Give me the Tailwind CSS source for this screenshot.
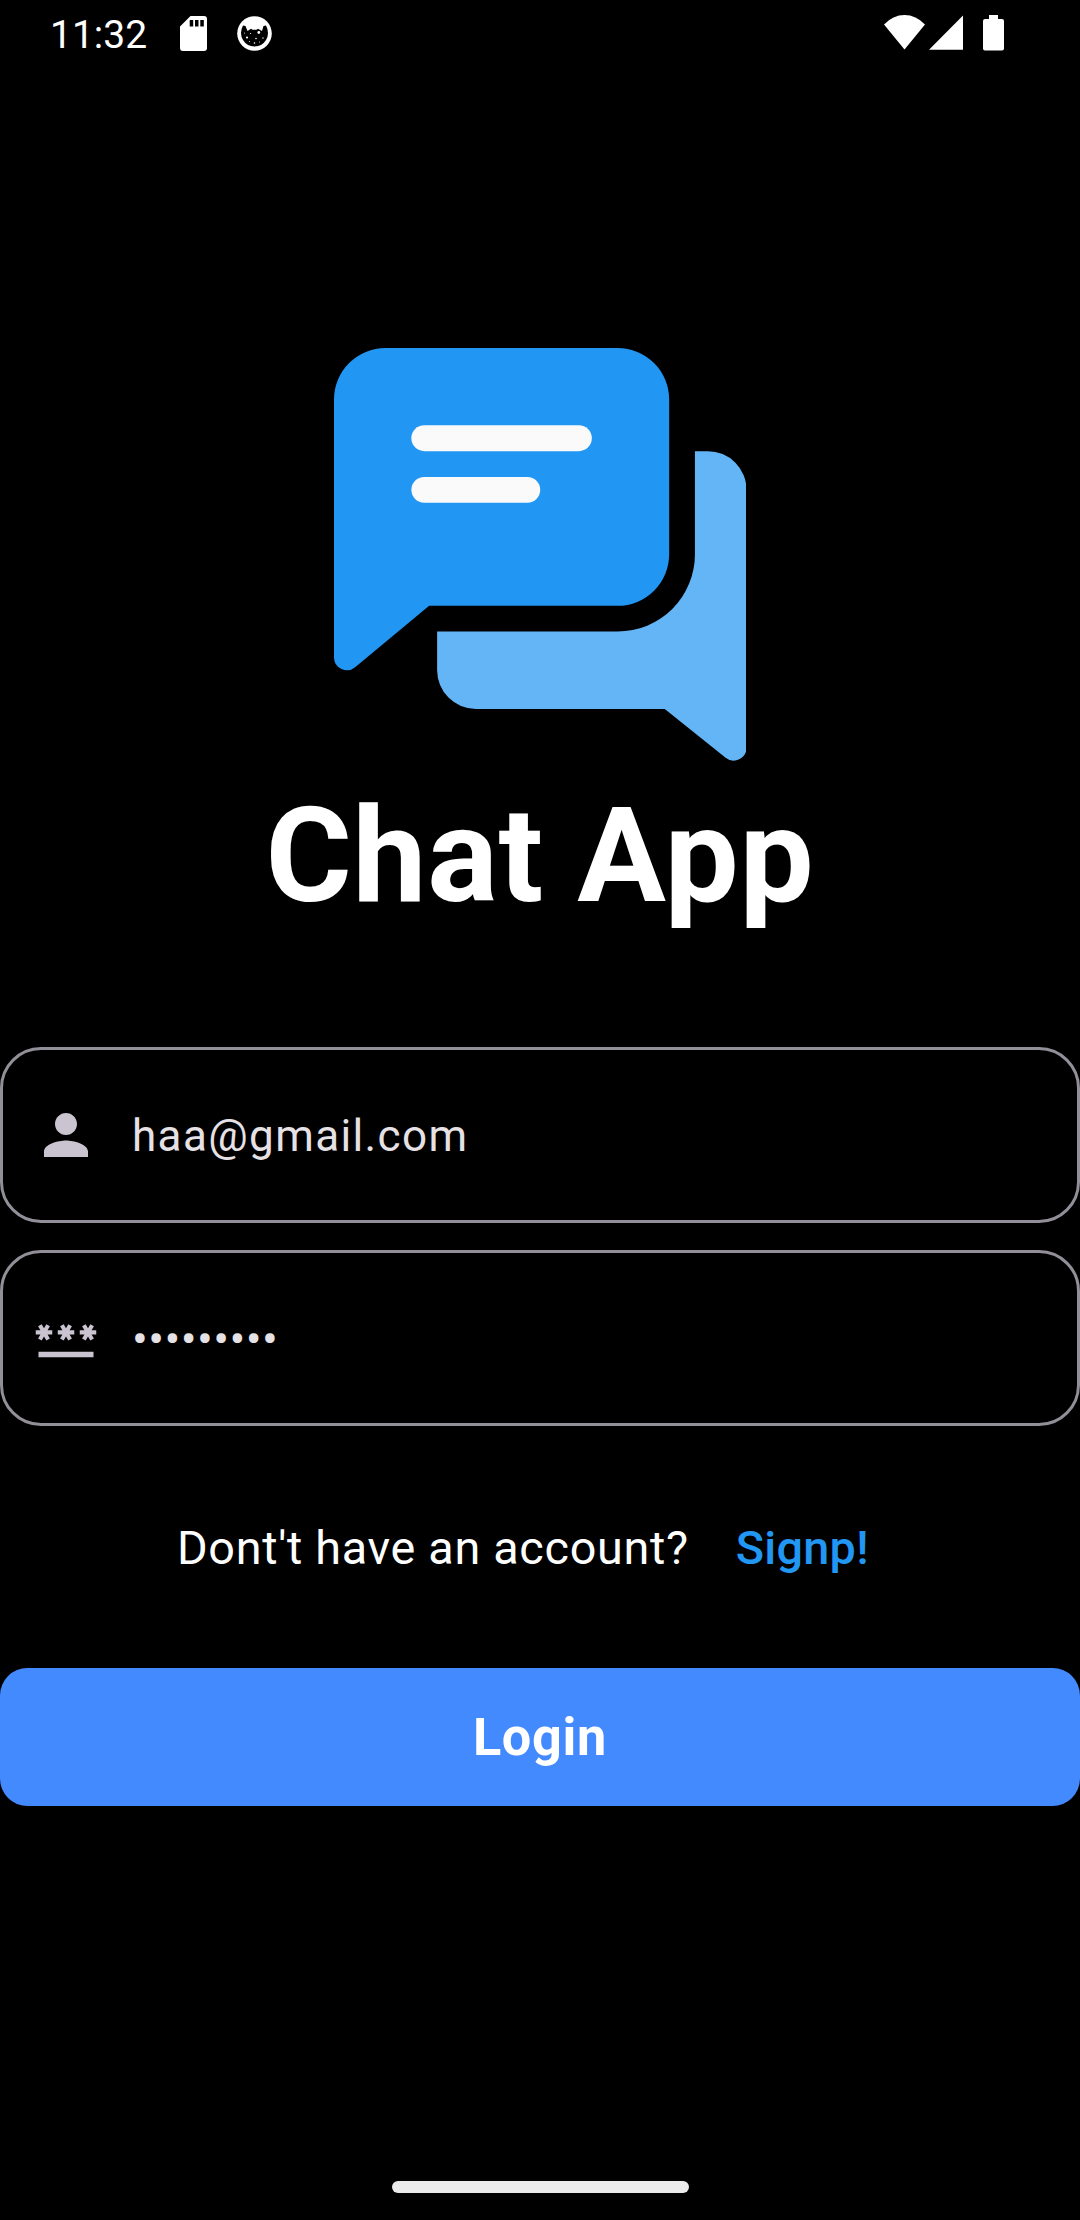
<!DOCTYPE html>
<html lang="en">
<head>
<meta charset="utf-8">
<title>Chat App</title>
<script src="https://cdn.jsdelivr.net/npm/@tailwindcss/browser@4"></script>
</head>
<body class="bg-black">
<div class="flex h-[2220px] w-[1080px] flex-col overflow-hidden bg-black font-[Roboto,sans-serif] text-white">
  <!-- Status bar -->
  <header class="flex h-[66px] shrink-0 items-start pl-[50px] pr-[76px]">
    <span class="w-[130px] pt-3 text-[39px] leading-[46px]">11:32</span>
    <svg class="mt-4 h-[35px] w-[27px]" viewBox="0 0 27 35"><path fill="#fff" fill-rule="evenodd" d="M10.500 0H24Q27 0 27 3V32Q27 35 24 35H3Q0 35 0 32V10.500ZM9.700 4V10.500H13.200V4ZM15 4V10.500H18.500V4ZM20.300 4V10.500H23.800V4Z"/></svg>
    <svg class="ml-[30px] mt-4 h-[35px] w-[35px]" viewBox="0 0 35 35">
      <circle cx="17.500" cy="17.500" r="17.300" fill="#fff"/>
      <path d="M6 9.500L8.500 10L10.500 15L14 12.800L15.500 13.800H19.500L21 12.800L25 15L26.500 10L29 9.500Q33 17 29 24Q25 30.500 17.500 30.500Q10 30.500 6 24Q2 17 6 9.500Z" fill="#000"/>
      <g fill="#fff"><circle cx="10" cy="21.500" r="1.100"/><circle cx="21.800" cy="16.500" r="1.400"/><circle cx="13.500" cy="17.500" r=".6"/><circle cx="19" cy="22.500" r=".8"/><circle cx="26" cy="22" r=".7"/><circle cx="17.500" cy="27" r=".8"/><circle cx="12.500" cy="25.500" r=".5"/><circle cx="22.500" cy="26" r=".5"/><circle cx="7.500" cy="17" r=".5"/></g>
    </svg>
    <div class="ml-auto flex items-start pt-[15px]">
      <svg class="h-[35px] w-[41px]" viewBox="0 0 41 35"><path fill="#fff" d="M0 9.500Q9 0 20.500 0T41 9.500L20.500 34.500Z"/></svg>
      <svg class="ml-1 h-[35px] w-[34px]" viewBox="0 0 34 35"><path fill="#fff" d="M34 .5V34.700H0Z"/></svg>
      <svg class="ml-5 h-[36px] w-[21px]" viewBox="0 0 21 36"><path fill="#fff" d="M6 0H15V4H19Q21 4 21 6V33.500Q21 35.500 19 35.500H2Q0 35.500 0 33.500V6Q0 4 2 4H6Z"/></svg>
    </div>
  </header>

  <main class="flex flex-col">
    <svg class="mx-auto mt-[282px] h-[412.5px] w-[412.5px] shrink-0" viewBox="0 0 16 16">
      <path fill="#64b5f6" d="M14 4h.5A1.500 1.500 0 0 1 16 5.500V15.500A.5.5 0 0 1 15.190 15.895L12.830 14H5.500A1.500 1.500 0 0 1 4 12.500V11H11A3 3 0 0 0 14 8Z"/>
      <path fill="#2196f3" d="M2 0H11A2 2 0 0 1 13 2V8A2 2 0 0 1 11 10H3.690L.82 12.380A.5.5 0 0 1 0 12V2A2 2 0 0 1 2 0Z"/>
      <rect x="3" y="3" width="7" height="1" rx=".5" fill="#fafafa"/>
      <rect x="3" y="5" width="5" height="1" rx=".5" fill="#fafafa"/>
    </svg>
    <h1 class="mt-[18px] text-center text-[132px] font-bold leading-[154px] tracking-[0.6875px]">Chat App</h1>

    <form class="mt-[114px] flex flex-col gap-[27px]">
      <div class="flex h-[176px] items-center rounded-[41px] border-[3px] border-[#938f99] pl-[30px]">
        <svg class="size-[66px]" viewBox="0 0 24 24" fill="#cac4d0"><path d="M12 12c2.210 0 4-1.790 4-4s-1.790-4-4-4-4 1.790-4 4 1.790 4 4 4zm0 2c-2.670 0-8 1.340-8 4v2h16v-2c0-2.660-5.330-4-8-4z"/></svg>
        <span class="ml-[33px] pt-[2px] text-[44px] leading-[66px] tracking-[1.375px] text-[#e6e1e5]">haa@gmail.com</span>
      </div>
      <div class="flex h-[176px] items-center rounded-[41px] border-[3px] border-[#938f99] pl-[30px]">
        <svg class="size-[66px]" viewBox="0 0 24 24" fill="#cac4d0">
          <defs><path id="star" d="M3.150 12.950 4 11.470l.85 1.480 1.300-.75-.85-1.480H7v-1.500H5.300l.85-1.470L4.850 7 4 8.470 3.150 7l-1.300.75.85 1.470H1v1.500h1.700l-.85 1.480z"/></defs>
          <path d="M2 17h20v2H2z"/><use href="#star"/><use href="#star" x="8"/><use href="#star" x="16"/>
        </svg>
        <span class="ml-[33px] pt-[2px] text-[47px] leading-[66px] tracking-[0.4px] text-[#e6e1e5]">•••••••••</span>
      </div>
    </form>

    <div class="mt-[95px] flex h-[55px] items-center pl-[177px] text-[46.75px] leading-[55px] tracking-[0.6875px]">
      <span class="whitespace-nowrap">Dont't have an account?</span>
      <a class="ml-[47px] font-medium tracking-[0.275px] text-[#2196f3]">Signp!</a>
    </div>

    <button class="mt-[92px] h-[138px] w-full rounded-[27.5px] bg-[#448aff] pt-[3px] text-[52.25px] font-bold tracking-[0.6875px]">Login</button>
  </main>

  <!-- Navigation handle -->
  <div class="mx-auto mb-[27px] mt-auto h-[12px] w-[297px] shrink-0 rounded-full bg-[#ebebeb]"></div>
</div>
</body>
</html>
